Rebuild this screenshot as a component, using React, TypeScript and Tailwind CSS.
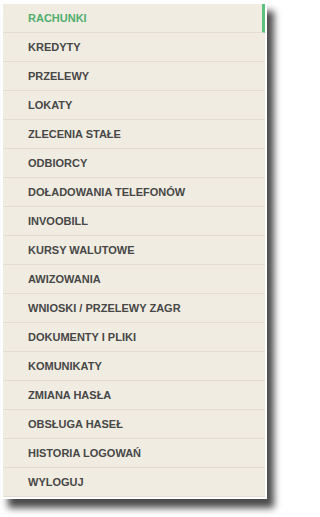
import React from 'react';

const items = [
  'RACHUNKI',
  'KREDYTY',
  'PRZELEWY',
  'LOKATY',
  'ZLECENIA STAŁE',
  'ODBIORCY',
  'DOŁADOWANIA TELEFONÓW',
  'INVOOBILL',
  'KURSY WALUTOWE',
  'AWIZOWANIA',
  'WNIOSKI / PRZELEWY ZAGR',
  'DOKUMENTY I PLIKI',
  'KOMUNIKATY',
  'ZMIANA HASŁA',
  'OBSŁUGA HASEŁ',
  'HISTORIA LOGOWAŃ',
  'WYLOGUJ',
];

export default function App() {
  return (
    <div className="w-[282px] h-[517px] bg-white pl-px pt-[2px]">
      <div className="w-[266px] bg-white p-[2px] shadow-[7px_9px_7px_rgba(0,0,0,0.7)]">
        <ul className="w-[262px] bg-[#f0ece1] font-['Liberation_Sans',Arial,sans-serif]">
          {items.map((label, i) => {
            const active = i === 0;
            return (
              <li
                key={label}
                className={`flex h-[29px] items-center border-b border-[#e3ded1] pl-[25px] text-[11px] font-bold ${
                  active ? 'text-[#4fae6e] border-r-[3px] border-r-[#5cc27e]' : 'text-[#474747]'
                }`}
              >
                {label}
              </li>
            );
          })}
        </ul>
      </div>
    </div>
  );
}
